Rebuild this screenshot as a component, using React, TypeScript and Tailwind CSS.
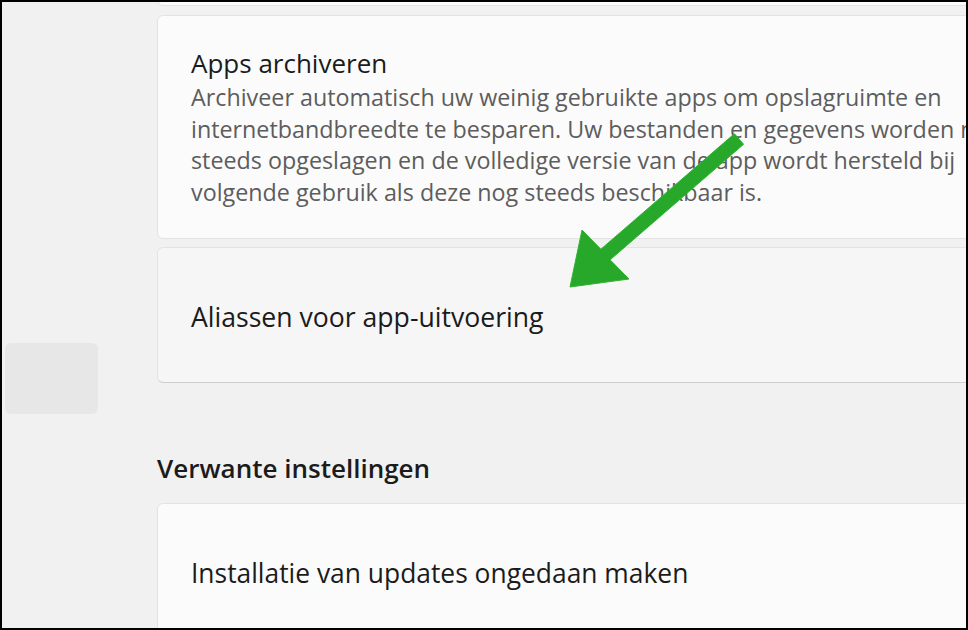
const sans = "font-['Open_Sans','Noto_Sans',sans-serif]";

const descLines = [
  "Archiveer automatisch uw weinig gebruikte apps om opslagruimte en",
  "internetbandbreedte te besparen. Uw bestanden en gegevens worden niet",
  "steeds opgeslagen en de volledige versie van de app wordt hersteld bij",
  "volgende gebruik als deze nog steeds beschikbaar is.",
];

function Arrow() {
  return (
    <svg
      className="pointer-events-none absolute left-0 top-0"
      width="968"
      height="630"
      viewBox="0 0 968 630"
    >
      <polygon
        points="732.4,131.7 741.6,142.3 608.1,257.8 627,277 568,285 580,228 598.9,247.2"
        fill="#27a82a"
        stroke="#2fb330"
        strokeWidth="1"
        strokeLinejoin="round"
      />
    </svg>
  );
}

export default function App() {
  return (
    <div
      className={`relative box-border flex h-[630px] w-[968px] overflow-hidden border-2 border-black bg-[#f1f1f1] ${sans}`}
    >
      {/* navigatie */}
      <div className="w-[155px] shrink-0 pt-[341px]">
        <div className="ml-[3px] h-[71px] w-[93px] rounded-[6px] bg-[#e7e7e7]" />
      </div>

      <div className="flex w-[830px] shrink-0 flex-col">
        <div className="-mt-[20px] h-[24px] shrink-0 rounded-b-[6px] border border-[#e3e3e3] bg-[#fbfbfb]" />

        <div className="mt-[9px] h-[224px] shrink-0 rounded-[6px] border border-[#e3e3e3] bg-[#fbfbfb] pl-[33px] pt-[31px]">
          <div className="text-[26px] leading-[32px] text-[#1b1b1b]">Apps archiveren</div>
          <div className="mt-[3px] text-[23.3px] leading-[31.7px] text-[#5d5d5d]">
            {descLines.map((l) => (
              <div key={l} className="whitespace-nowrap">
                {l}
              </div>
            ))}
          </div>
        </div>

        <div className="mt-[8px] flex h-[136px] shrink-0 items-center rounded-[6px] border border-[#e3e3e3] border-b-[#cfcfcf] bg-[#f6f6f6] pl-[33px] pt-[4px]">
          <span className="text-[26.6px] leading-[32px] text-[#1b1b1b]">
            Aliassen voor app-uitvoering
          </span>
        </div>

        <h2 className="mt-[69px] shrink-0 text-[26px] font-semibold leading-[32px] text-[#1b1b1b]">
          Verwante instellingen
        </h2>

        <div className="mt-[19px] flex h-[136px] shrink-0 items-center rounded-[6px] border border-[#e3e3e3] bg-[#fbfbfb] pl-[33px] pt-[4px]">
          <span className="text-[26.4px] leading-[32px] text-[#1b1b1b]">
            Installatie van updates ongedaan maken
          </span>
        </div>
      </div>

      <Arrow />
    </div>
  );
}
